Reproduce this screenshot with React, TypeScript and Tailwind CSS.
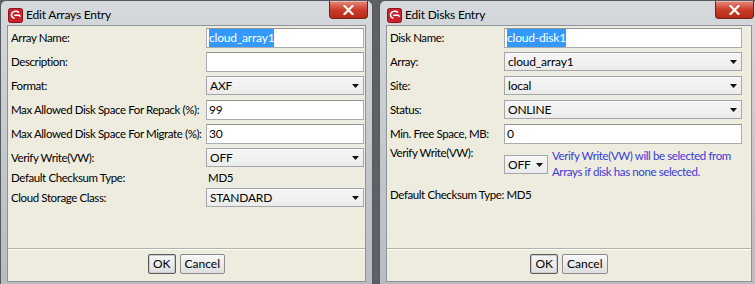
import React from "react";

const font = { fontFamily: 'Lato, "Noto Sans", sans-serif' };

const AppIcon = () => (
  <svg width={15} height={15} viewBox="0 0 15 15">
    <rect x={0.5} y={0.5} width={14} height={14} rx={2} fill="#c8232c" stroke="#8e1219" />
    <path d="M11 4.5C9 2.8 5.2 2.8 3.8 5.3 2.8 7.3 4 9.8 6.5 10.3" stroke="#fff" strokeWidth={1.6} fill="none" />
    <path d="M6.2 7.2h5.2l1 1.6" stroke="#fff" strokeWidth={1.5} fill="none" />
  </svg>
);

const CloseButton = () => (
  <div className="flex h-[18px] w-[39px] items-center justify-center rounded-b-[4px] border border-t-0 border-[#6e2319] bg-gradient-to-b from-[#e58a7c] via-[#cc3d2b] to-[#b42a17] shadow-[inset_0_1px_0_rgba(255,255,255,0.4)]">
    <svg width={11} height={10} viewBox="0 0 11 10">
      <path d="M1.5 1L9.5 9M9.5 1L1.5 9" stroke="#fff" strokeWidth={2.2} strokeLinecap="square" />
    </svg>
  </div>
);

const TextInput = ({ value, selected }: { value: string; selected?: boolean }) => (
  <div className="flex h-[20px] w-full items-center border border-[#a9adb2] border-t-[#8f949a] bg-white pl-[2px] text-[12px] tracking-[-0.2px] text-black">
    {selected ? <span className="bg-[#3399ff] text-white">{value}</span> : value}
  </div>
);

const Select = ({ value, className = "w-full" }: { value: string; className?: string }) => (
  <div className={`flex h-[19px] items-center justify-between border border-[#a3a7ab] bg-gradient-to-b from-[#f7f7f7] to-[#ebebeb] pl-[3px] pr-[4px] text-[12px] tracking-[-0.2px] text-black ${className}`}>
    <span>{value}</span>
    <svg width={7} height={4} viewBox="0 0 7 4">
      <path d="M0 0h7L3.5 4z" fill="#111" />
    </svg>
  </div>
);

const Button = ({ label, focused }: { label: string; focused?: boolean }) => (
  <div
    className={`flex h-[20px] items-center justify-center rounded-[2px] border bg-gradient-to-b from-[#f8f8f8] to-[#dedede] px-[4px] text-[12px] text-black ${
      focused ? "border-[#5c5c5c] shadow-[inset_0_0_0_1px_#c9c9c9]" : "border-[#8c8c8c]"
    }`}
  >
    {label}
  </div>
);

const Dialog = ({
  title,
  className,
  children,
}: {
  title: string;
  className: string;
  children: React.ReactNode;
}) => (
  <div className={`flex h-[284px] flex-col rounded-t-[6px] border border-b-0 border-[#555a60] bg-gradient-to-b from-[#d6d9dc] via-[#c4c9ce] to-[#b6bcc2] ${className}`}>
    {/* barra de título */}
    <div className="flex h-[24px] shrink-0 items-start justify-between pl-[7px] pr-[4px]">
      <div className="flex items-center gap-[3px] pt-[5px] text-[12px] tracking-[-0.2px] text-black">
        <AppIcon />
        <span>{title}</span>
      </div>
      <CloseButton />
    </div>
    {/* conteúdo */}
    <div className="mx-[6px] mb-[2px] flex flex-1 flex-col border border-[#8d9399] bg-[#eeecdf]">
      {children}
    </div>
  </div>
);

const Footer = () => (
  <div className="flex h-[33px] shrink-0 items-start justify-center gap-[4px] border-t border-[#b6b3a6] pt-[5px] shadow-[inset_0_1px_0_#fff]">
    <Button label="OK" focused />
    <Button label="Cancel" />
  </div>
);

const Label = ({ children }: { children: React.ReactNode }) => (
  <div className="flex h-[20px] items-center whitespace-nowrap text-[11.5px] tracking-[-0.4px] text-black">{children}</div>
);

export default function App() {
  return (
    <div className="flex h-[284px] w-[755px] overflow-hidden bg-[#5d6166]" style={font}>
      <Dialog title="Edit Arrays Entry" className="w-[373px] shrink-0">
        <div className="flex-1 pl-[3px] pt-[2px]">
          <div className="grid grid-cols-[195px_158px] gap-y-[4px]">
            <Label>Array Name:</Label>
            <TextInput value="cloud_array1" selected />
            <Label>Description:</Label>
            <TextInput value="" />
            <Label>Format:</Label>
            <Select value="AXF" />
            <Label>Max Allowed Disk Space For Repack (%):</Label>
            <TextInput value="99" />
            <Label>Max Allowed Disk Space For Migrate (%):</Label>
            <TextInput value="30" />
            <Label>Verify Write(VW):</Label>
            <Select value="OFF" />
            <div className="flex h-[12px] items-center text-[11.5px] tracking-[-0.4px] text-black">Default Checksum Type:</div>
            <div className="flex h-[12px] items-center pl-[2px] text-[11.5px] tracking-[-0.3px] text-black">MD5</div>
            <Label>Cloud Storage Class:</Label>
            <Select value="STANDARD" />
          </div>
        </div>
        <Footer />
      </Dialog>

      <div className="w-[6px] shrink-0" />

      <Dialog title="Edit Disks Entry" className="w-[380px] shrink-0">
        <div className="flex-1 pl-[3px] pt-[2px]">
          <div className="grid grid-cols-[114px_238px] gap-y-[4px]">
            <Label>Disk Name:</Label>
            <TextInput value="cloud-disk1" selected />
            <Label>Array:</Label>
            <Select value="cloud_array1" />
            <Label>Site:</Label>
            <Select value="local" />
            <Label>Status:</Label>
            <Select value="ONLINE" />
            <Label>Min. Free Space, MB:</Label>
            <TextInput value="0" />
            <div className="-mt-[1px] whitespace-nowrap text-[11.5px] leading-[12px] tracking-[-0.4px] text-black">Verify Write(VW):</div>
            <div className="flex items-start gap-[4px]">
              <Select value="OFF" className="mt-[7px] w-[44px] shrink-0" />
              <div className="whitespace-nowrap text-[11.5px] leading-[16px] tracking-[-0.4px] text-[#3a3ad8]">
                Verify Write(VW) will be selected from
                <br />
                Arrays if disk has none selected.
              </div>
            </div>
            <div className="col-span-2 mt-[2px] text-[11.5px] tracking-[-0.4px] text-black">Default Checksum Type: MD5</div>
          </div>
        </div>
        <Footer />
      </Dialog>
    </div>
  );
}
